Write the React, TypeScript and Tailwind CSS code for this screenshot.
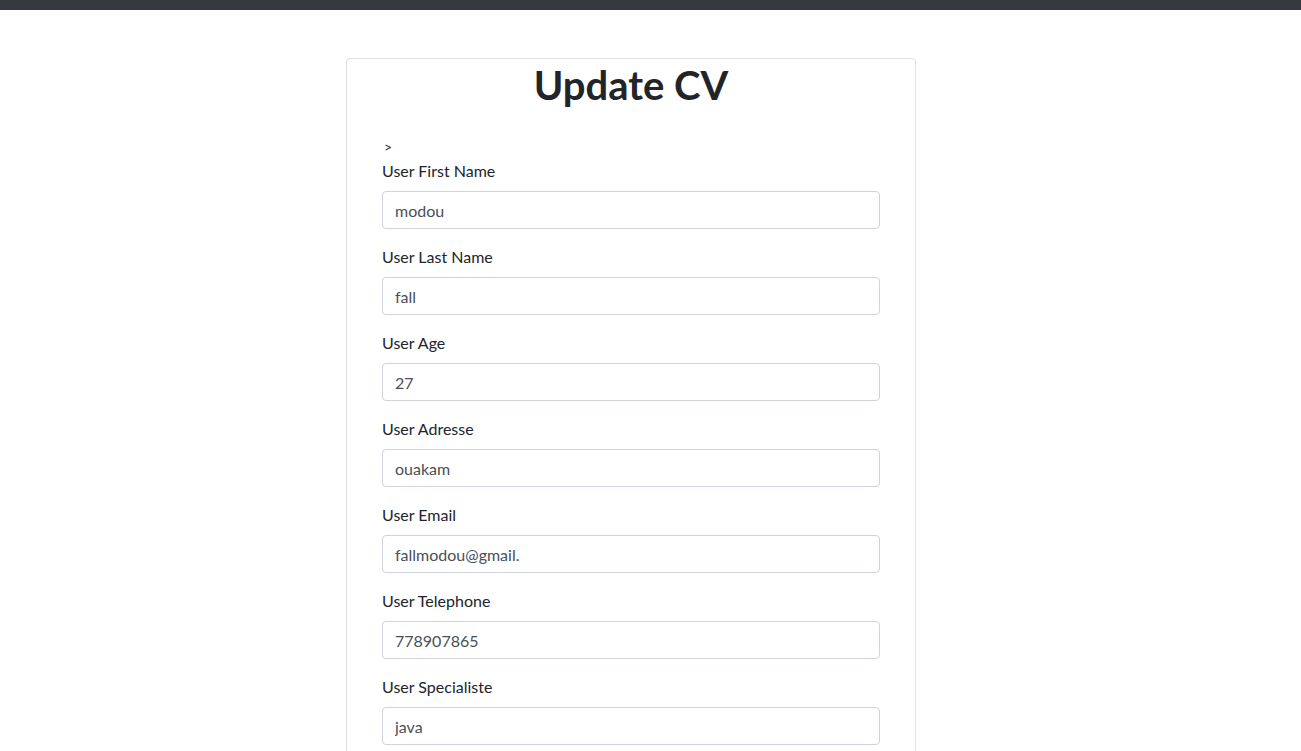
import React from 'react';

const fields = [
  { label: 'User First Name', value: 'modou' },
  { label: 'User Last Name', value: 'fall' },
  { label: 'User Age', value: '27' },
  { label: 'User Adresse', value: 'ouakam' },
  { label: 'User Email', value: 'fallmodou@gmail.' },
  { label: 'User Telephone', value: '778907865' },
  { label: 'User Specialiste', value: 'java' },
];

export default function App() {
  return (
    <div className="min-h-[751px] bg-white text-[#212529]" style={{ fontFamily: 'Lato, "Noto Sans", sans-serif' }}>
      <nav className="h-[10px] bg-[#343a40]" />
      <div className="ml-[346px] mt-[48px] w-[570px] rounded border border-[#dfdfdf] bg-white px-[35px] pb-6">
        <h1 className="mt-[2px] text-center text-[40px] leading-[48px] font-bold">Update CV</h1>
        <form className="mt-[26px]">
          <div className="pl-[2px] text-[14px] leading-[24px]">&gt;</div>
          {fields.map((f) => (
            <div key={f.label} className="mb-4">
              <label className="mb-2 block text-base leading-6">{f.label}</label>
              <input
                readOnly
                value={f.value}
                className="block h-[38px] w-full rounded border border-[#ced4da] px-3 text-base text-[#495057] outline-none"
              />
            </div>
          ))}
        </form>
      </div>
    </div>
  );
}
